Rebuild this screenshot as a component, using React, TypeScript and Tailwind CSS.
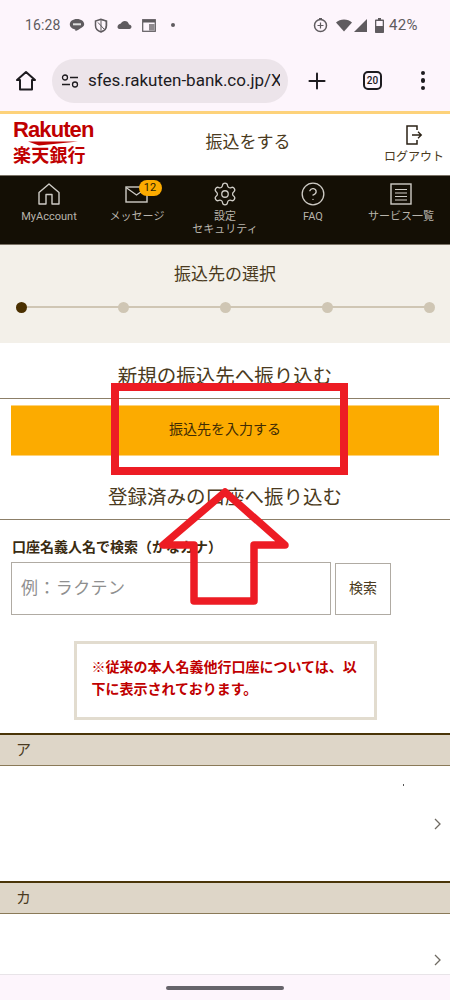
import { Plus, CircleHelp, Settings } from 'lucide-react';

const jp = "font-['Roboto','Noto_Sans_CJK_JP',sans-serif]";

const StatusBar = () => (
    <div className="h-[50px] flex items-center pl-[25px] pr-[32px] text-[#5f5b5f] text-[14px]">
        <span className="tracking-[0.1px] mr-[9px]">16:28</span>
        {/* notification icons */}
        <svg width="16" height="15" viewBox="0 0 16 15" className="mr-[9px]"><path d="M8 1C3.800 1 .8 3.300.8 6.300c0 2.600 2.300 4.600 5.200 5.100.6.100.6.500.4 1.600.1.400 3-1.200 4.800-2.500C13.800 9.400 15.200 8 15.200 6.300 15.200 3.300 12.200 1 8 1z" fill="#5f5b5f" /><rect x="4" y="5.300" width="8" height="2" fill="#ddd" /></svg>
        <svg width="14" height="15" viewBox="0 0 14 15" className="mr-[9px]"><path d="M7 1.200 1.500 3v4.500c0 3 2.300 5.500 5.500 6.500 3.200-1 5.500-3.500 5.500-6.500V3z" fill="none" stroke="#5f5b5f" strokeWidth="1.500" /><path d="M7 1.500v12.300c3-1 5.200-3.300 5.200-6.300V3.200z" fill="none" stroke="#5f5b5f" /><path d="M4 4.500 10 11" stroke="#5f5b5f" /></svg>
        <svg width="15" height="11" viewBox="0 0 15 11" className="mr-[10px]"><path d="M12 4.400C11.500 2.200 9.700 1 7.800 1 6 1 4.600 2 3.900 3.400 1.900 3.700.5 5.200.5 7c0 1.100.9 2 2 2h10c1.200 0 2-1 2-2.200 0-1.300-1.100-2.300-2.500-2.400z" fill="#5f5b5f" /></svg>
        <svg width="14" height="13" viewBox="0 0 14 13" className="mr-[15px]"><rect x=".7" y=".7" width="12.600" height="11.600" fill="none" stroke="#5f5b5f" strokeWidth="1.200" /><rect x="1" y="1" width="12" height="2.500" fill="#5f5b5f" /><rect x="7" y="5" width="5.500" height="6.500" fill="#5f5b5f" opacity=".7" /></svg>
        <span className="w-[4px] h-[4px] rounded-full bg-[#5f5b5f]" />
        <div className="ml-auto flex items-center">
            <svg width="15" height="15" viewBox="0 0 15 15" className="mr-[8px]"><circle cx="7.500" cy="7.500" r="6" fill="none" stroke="#5f5b5f" strokeWidth="1.500" /><path d="M7.500 4.500v6M4.500 7.500h6" stroke="#5f5b5f" strokeWidth="1.200" /><rect x="6" y="0" width="3" height="2" fill="#5f5b5f" /></svg>
            <svg width="16" height="13" viewBox="0 0 16 13" className="mr-[2px]"><path d="M0 3.500C2 1.500 5 .5 8 .5s6 1 8 3L8 12.500z" fill="#5f5b5f" /></svg>
            <svg width="13" height="13" viewBox="0 0 13 13" className="mr-[8px]"><path d="M13 0v13H0z" fill="#5f5b5f" /></svg>
            <svg width="9" height="15" viewBox="0 0 9 15" className="mr-[5px]"><path d="M3 0h3v1.500h2.200c.5 0 .8.300.8.800V14c0 .5-.3 1-.8 1H.8C.3 15 0 14.500 0 14V2.300c0-.5.300-.8.800-.8H3z" fill="#5f5b5f" /><rect x="1.300" y="3" width="6.400" height="5" fill="#fdf5fc" /></svg>
            <span className="text-[15px] tracking-[0.4px]">42%</span>
        </div>
    </div>
);

const Toolbar = () => (
    <div className="h-[61px] flex items-center text-[#1d1b1f]">
        <div className="w-[52px] flex justify-center">
            <svg width="22" height="21" viewBox="0 0 22 21"><path d="M11 2 2 10h3v9.500h12V10h3z" fill="none" stroke="#1d1b1f" strokeWidth="2" strokeLinejoin="round" /></svg>
        </div>
        <div className="w-[236px] h-[44px] rounded-full bg-[#ece4ea] flex items-center pl-[9px] overflow-hidden">
            <svg width="18" height="14" viewBox="0 0 18 14" className="shrink-0 mr-[9px]"><circle cx="4" cy="3.500" r="2.500" fill="none" stroke="#1d1b1f" strokeWidth="1.300" /><path d="M9 3.500h8M1 10.500h8" stroke="#1d1b1f" strokeWidth="1.500" /><circle cx="14" cy="10.500" r="2.500" fill="none" stroke="#1d1b1f" strokeWidth="1.300" /></svg>
            <span className="text-[17px] whitespace-nowrap w-[192px] overflow-hidden">sfes.rakuten-bank.co.jp/X</span>
        </div>
        <div className="w-[58px] flex justify-center">
            <Plus size={26} strokeWidth={1.800} />
        </div>
        <div className="w-[52px] flex justify-center pl-[1px]">
            <div className="w-[19px] h-[19px] rounded-[5px] border-2 border-[#1d1b1f] flex items-center justify-center text-[10px] font-medium">20</div>
        </div>
        <div className="flex-1 flex flex-col items-center gap-[3px] pr-[2px]">
            <span className="w-[4.500px] h-[4.500px] rounded-full bg-[#1d1b1f]" />
            <span className="w-[4.500px] h-[4.500px] rounded-full bg-[#1d1b1f]" />
            <span className="w-[4.500px] h-[4.500px] rounded-full bg-[#1d1b1f]" />
        </div>
    </div>
);

const SiteHeader = () => (
    <div className="h-[64px] bg-white border-t-[3px] border-[#fdd27a] flex">
        <div className="w-[108px] pl-[13px] pt-[6px] text-[#bf0000]">
            <div className="font-['Liberation_Sans',sans-serif] text-[22px] leading-[20px] font-bold tracking-[-0.9px] h-[18px]">Rakuten</div>
            <svg width="82" height="5" viewBox="0 0 82 5" className="block ml-[-1px] mt-[3px]"><path d="M16 .5h50L27 4.500z" fill="#bf0000" /></svg>
            <div className="text-[18px] leading-[20px] font-bold tracking-[0.2px]">楽天銀行</div>
        </div>
        <div className="flex-1 text-center text-[17px] text-[#4a3a20] pt-[16px] pl-[10px]">振込をする</div>
        <div className="w-[72px] flex flex-col items-center pt-[11px] text-[#4a3a20]">
            <svg width="18" height="20" viewBox="0 0 18 20"><path d="M12 5V1H2v18h10v-4" fill="none" stroke="#2a2115" strokeWidth="1.500" /><path d="M7 10h9M13 6.800 16.300 10 13 13.200" fill="none" stroke="#2a2115" strokeWidth="1.300" /></svg>
            <span className="text-[12px] leading-[14px] mt-[5px] whitespace-nowrap">ログアウト</span>
        </div>
    </div>
);

const NavItem = ({ icon, label, sub }: { icon: any; label: string; sub?: string }) => (
    <div className="flex-1 flex flex-col items-center pt-[6px] text-[#b8b4ac] text-[11px] leading-[13px]">
        <div className="h-[23px] flex items-center justify-center relative">{icon}</div>
        <div className="mt-[5px] whitespace-nowrap">{label}</div>
        {sub && <div className="whitespace-nowrap">{sub}</div>}
    </div>
);

const Nav = () => (
    <div className="h-[70px] bg-[#140f05] border-y border-[#7a7266] flex px-[5px]">
        <NavItem label="MyAccount" icon={
            <svg width="24" height="24" viewBox="0 0 24 24"><path d="M2 10.500 12 2l10 8.500V22H15V12.500H9V22H2z" fill="none" stroke="#cfccc6" strokeWidth="1.400" strokeLinejoin="round" /></svg>
        } />
        <NavItem label="メッセージ" icon={
            <div className="relative ml-[3px]">
                <svg width="24" height="18" viewBox="0 0 24 18" className="mt-[3px] mr-[4px]"><rect x="1" y="1" width="21" height="15" fill="none" stroke="#cfccc6" strokeWidth="1.400" /><path d="M1 1.500 11.500 9 22 1.500" fill="none" stroke="#cfccc6" strokeWidth="1.300" /></svg>
                <span className="absolute left-[14px] top-[-3px] w-[23px] h-[16px] rounded-full bg-[#fcab00] text-[#2a1c00] text-[11px] leading-[16px] text-center">12</span>
            </div>
        } />
        <NavItem label="設定" sub="セキュリティ" icon={<Settings size={26} strokeWidth={1.200} color="#cfccc6" />} />
        <NavItem label="FAQ" icon={<CircleHelp size={26} strokeWidth={1.200} color="#cfccc6" />} />
        <NavItem label="サービス一覧" icon={
            <svg width="22" height="22" viewBox="0 0 22 22"><rect x="1" y="1" width="20" height="20" fill="none" stroke="#cfccc6" strokeWidth="1.400" /><path d="M5 6.500h12M5 10h12M5 13.500h12M5 17h12" stroke="#cfccc6" strokeWidth="1.200" /></svg>
        } />
    </div>
);

const Stepper = () => (
    <div className="h-[98px] bg-[#f3f0e9] pt-[18px]">
        <div className="text-center text-[17px] leading-[22px] text-[#4a3a20]">振込先の選択</div>
        <div className="relative mt-[17px] ml-[16px] mr-[15px] h-[11px] flex justify-between items-center">
            <div className="absolute left-[4px] right-[4px] top-[4px] h-[2px] bg-[#cfc6b4]" />
            <span className="relative w-[11px] h-[11px] rounded-full bg-[#4a3000]" />
            <span className="relative w-[11px] h-[11px] rounded-full bg-[#cfc6b4]" />
            <span className="relative w-[11px] h-[11px] rounded-full bg-[#cfc6b4]" />
            <span className="relative w-[11px] h-[11px] rounded-full bg-[#cfc6b4]" />
            <span className="relative w-[11px] h-[11px] rounded-full bg-[#cfc6b4]" />
        </div>
    </div>
);

const SectionTitle = ({ text, h }: { text: string; h: string }) => (
    <div className={`${h} border-b border-[#8c7f68] flex items-end justify-center pb-[9px] text-[19.500px] leading-[24px] text-[#4a3a20]`}>{text}</div>
);

const KanaRow = ({ kana, h, pad }: { kana: string; h: string; pad: string }) => (
    <div>
        <div className="h-[33px] bg-[#ded6c8] border-t-2 border-[#4a3508] border-b border-b-[#8a7a58] pl-[16px] text-[15px] leading-[31px] text-[#4a3a20]">{kana}</div>
        <div className={`${h} ${pad} bg-white flex justify-end pr-[9px]`}>
            <svg width="7" height="12" viewBox="0 0 7 12"><path d="M1 1l5 5-5 5" fill="none" stroke="#6f6a62" strokeWidth="1.300" /></svg>
        </div>
    </div>
);

export default function App() {
    return (
        <div className={`relative w-[450px] h-[1000px] overflow-hidden bg-[#fdf5fc] ${jp}`}>
            <StatusBar />
            <Toolbar />
            <SiteHeader />
            <Nav />
            <Stepper />

            <div className="bg-white h-[631px] overflow-hidden">
                <SectionTitle text="新規の振込先へ振り込む" h="h-[56px]" />
                <div className="mt-[6px] mx-[11px] h-[51px] bg-[#fcab00] border-y border-[#fdd27a] flex items-center justify-center pb-[3px] text-[14px] text-[#3f2c05]">振込先を入力する</div>
                <SectionTitle text="登録済みの口座へ振り込む" h="h-[64px]" />

                <div className="mt-[18px] ml-[12px] text-[14px] leading-[18px] font-bold text-[#3a2c12]">口座名義人名で検索（かなカナ）</div>
                <div className="mt-[6px] ml-[11px] flex items-center gap-[4px]">
                    <div className="w-[320px] h-[53px] border border-[#b0aba3] flex items-center pl-[9px] pt-[1px] text-[17px] text-[#8f8f8f] tracking-[0.4px]">例：ラクテン</div>
                    <div className="w-[56px] h-[52px] border border-[#b0aba3] flex items-center justify-center text-[14px] text-[#4a3a20]">検索</div>
                </div>

                <div className="mt-[26px] mx-auto w-[303px] h-[79px] border-[3px] border-[#e2dccf] pl-[15px] pr-[14px] pt-[12px] text-[14px] leading-[22px] font-bold text-[#c00000]">
                    ※従来の本人名義他行口座については、以下に表示されております。
                </div>

                <div className="mt-[13px]">
                    <KanaRow kana="ア" h="h-[115px]" pad="items-center" />
                    <KanaRow kana="カ" h="h-[60px]" pad="items-start pt-[40px]" />
                </div>
            </div>

            {/* bottom gesture bar */}
            <div className="h-[26px] bg-[#fdf5fc] border-t border-[#e8e4e8] flex justify-center pt-[11px]">
                <span className="w-[118px] h-[4px] rounded-full bg-[#66636a]" />
            </div>

            {/* stray speck in the first row */}
            <div className="absolute left-[403px] top-[784px] w-[1px] h-[2px] bg-[#555]" />

            {/* red annotation over the page */}
            <div className="absolute left-[111px] top-[383px] w-[237px] h-[92px] border-[8px] border-[#ed1c24]" />
            <svg className="absolute left-0 top-0 pointer-events-none" width="450" height="1000">
                <path d="M225 492 163 545h31v56h60v-56h31z" fill="none" stroke="#ed1c24" strokeWidth="7.500" strokeLinejoin="round" />
            </svg>
        </div>
    );
}
